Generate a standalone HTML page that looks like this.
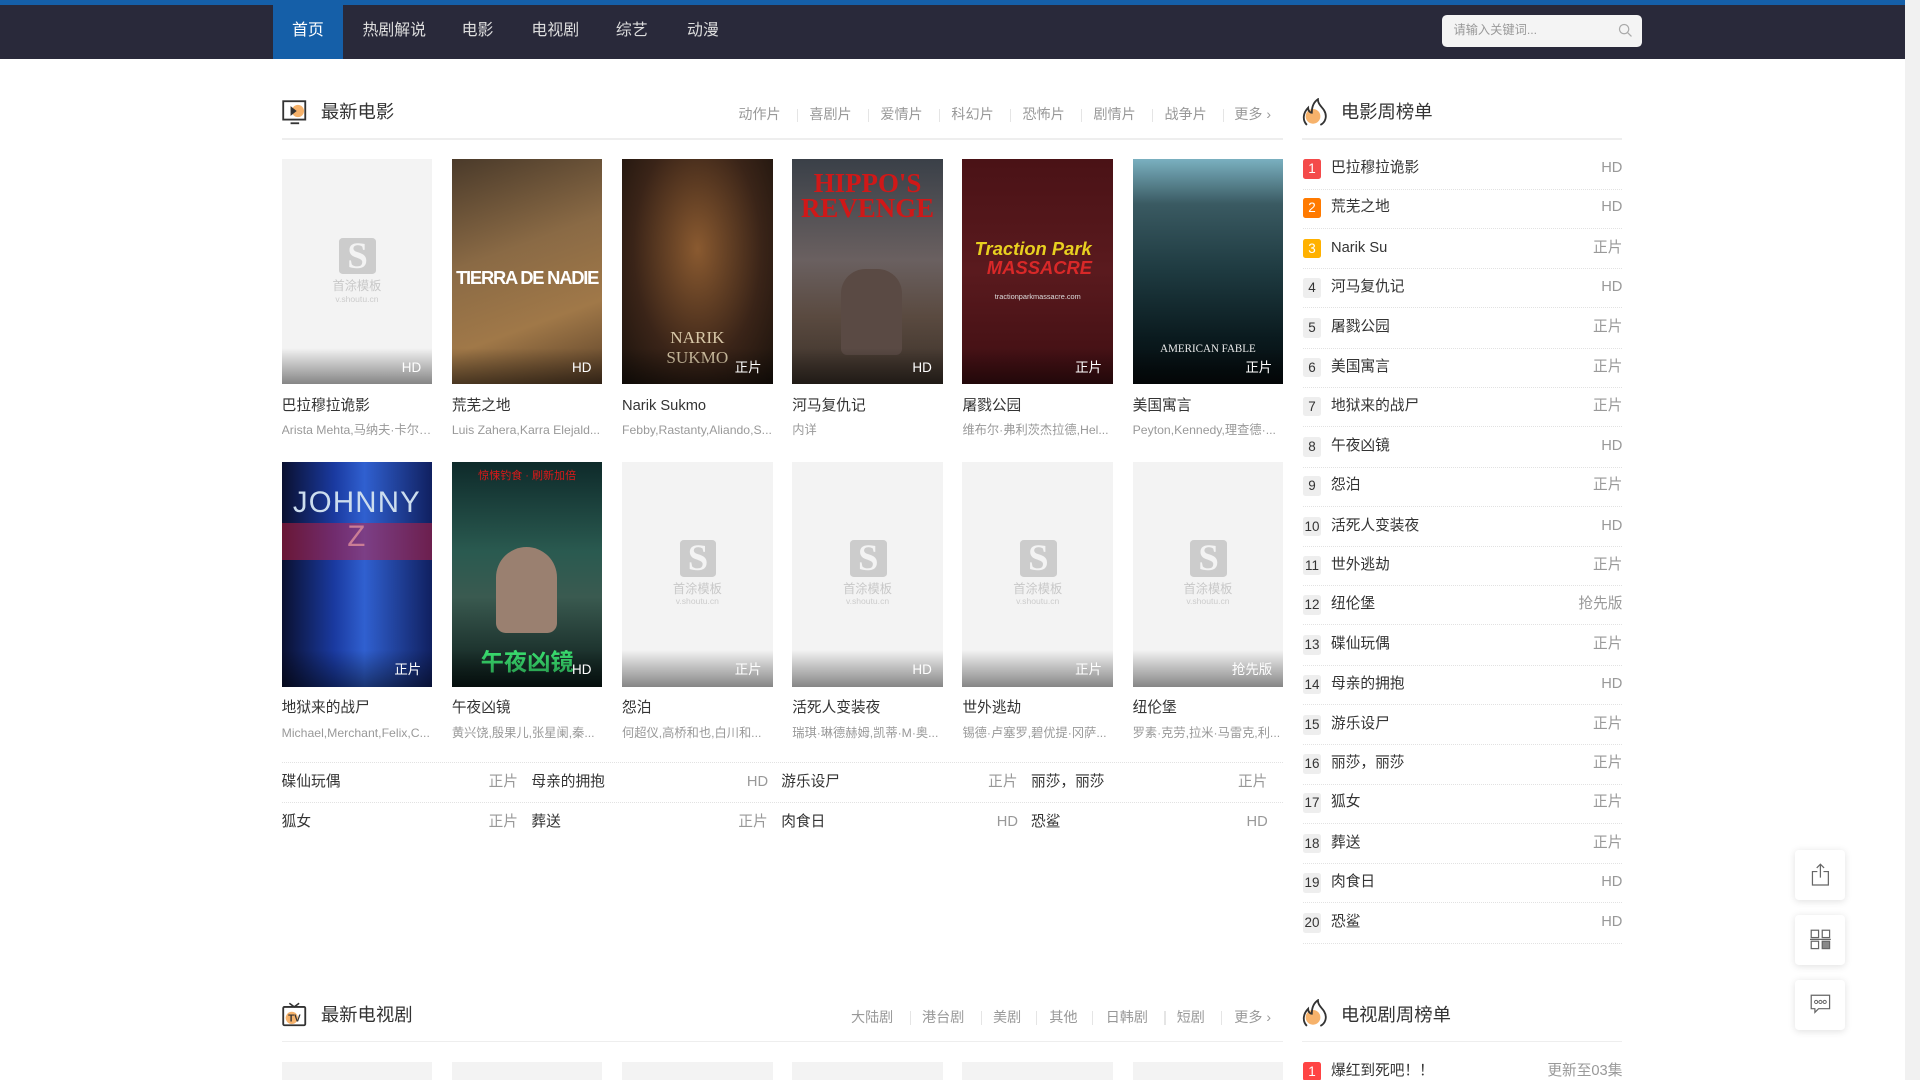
<!DOCTYPE html>
<html><head><meta charset="utf-8">
<style>
*{margin:0;padding:0;box-sizing:border-box}
html,body{width:1920px;height:1080px;overflow:hidden;background:#fff}
#w{zoom:1.22449;width:1568px;height:882px;position:relative;overflow:hidden;font-family:"Liberation Sans","Noto Sans CJK SC",sans-serif;color:#333;line-height:16px}
.a{position:absolute}
.top{left:0;top:0;width:1556px;height:4px;background:#155fa8}
.nav{left:0;top:4px;width:1556px;height:44px;background:#29293a}
.nav span{position:absolute;top:0;height:44px;line-height:42px;color:#ddd;font-size:13px}
.sb{left:1556px;top:0;width:12px;height:882px;background:#f1f1f1}
.search{left:1178px;top:12px;width:163px;height:26px;background:#f4f4f4;border-radius:4px;font-size:10px;color:#999;line-height:26px;padding-left:9px}
.hd{font-size:15px;color:#333;line-height:20px}
.tabs{font-size:11.5px;color:#999}
.tabs span{position:absolute;top:0;white-space:nowrap;line-height:16px}
.tabs i{position:absolute;top:3px;width:1px;height:11px;background:#e5e5e5}
.line{height:1px;background:#eee}
.p{width:123px;height:184px;overflow:hidden}
.p .g{position:absolute;left:0;bottom:0;width:100%;height:30px;background:linear-gradient(rgba(0,0,0,0),rgba(0,0,0,.45))}
.p .l{position:absolute;right:9px;bottom:6px;color:#fff;font-size:11px}
.ph{background:#f3f3f3}
.ph .s{position:absolute;left:47px;top:64px;width:30px;height:30px;background:#ccc;border-radius:3px}
.ph .s:after{content:"S";position:absolute;left:0;top:-3px;width:30px;text-align:center;color:#f3f3f3;font:bold 30px/36px "Liberation Serif",serif}
.ph .t{position:absolute;left:0;top:98px;width:123px;text-align:center;color:#c8c8c8;font-size:10px;line-height:12px}
.ph .u{position:absolute;left:0;top:110px;width:123px;text-align:center;color:#ccc;font-size:7px;line-height:9px}
.tt{font-size:12px;color:#333;white-space:nowrap;line-height:16px}
.ac{font-size:10px;color:#999;white-space:nowrap;width:123px;overflow:hidden;text-overflow:ellipsis;line-height:14px}
.row{font-size:12px;color:#333}
.row span,.row b{line-height:16px;height:16px}
.row b{font-weight:normal;position:absolute;color:#999}
.dot{height:0;border-top:1px dotted #e2e2e2}
.rk .n{position:absolute;left:0;width:15px;height:16px;line-height:16px;text-align:center;font-size:11px;color:#333;background:#eee;border-radius:2px}
.rk .nm{position:absolute;left:23px;font-size:12px;color:#333;line-height:16px;height:16px}
.rk .r{position:absolute;right:0;font-size:12px;color:#999;line-height:16px;height:16px}
.fb{width:41px;height:41px;background:#fff;border-radius:3px;box-shadow:0 1px 6px rgba(0,0,0,.12)}
</style></head><body><div id="w">
<div class="a top"></div>
<div class="a nav">
<span style="left:223px;width:57px;background:#155fa8;text-align:center;color:#fff">首页</span>
<span style="left:296px">热剧解说</span><span style="left:377px">电影</span><span style="left:434px">电视剧</span><span style="left:503px">综艺</span><span style="left:561px">动漫</span>
</div>
<div class="a search">请输入关键词...<svg style="position:absolute;right:8px;top:7px" width="12" height="12" viewBox="0 0 12 12"><circle cx="5" cy="5" r="3.8" fill="none" stroke="#aaa" stroke-width="1"/><path d="M8 8l3 3" stroke="#aaa"/></svg></div>
<div class="a sb"></div>

<svg class="a" style="left:230px;top:82px" width="21" height="21" viewBox="0 0 21 21"><rect x="1" y="1" width="18" height="15" fill="none" stroke="#333" stroke-width="1.5"/><circle cx="13" cy="9" r="5" fill="#f6b26b"/><path d="M7 5v8l5-4z" fill="#333"/><path d="M7 19h7" stroke="#333" stroke-width="1.5"/></svg>
<div class="a hd" style="left:262px;top:82px">最新电影</div>
<div class="a tabs" style="left:603px;top:86px;width:445px;height:16px">
<span style="left:0">动作片</span><i style="left:48px"></i><span style="left:58px">喜剧片</span><i style="left:106px"></i><span style="left:116px">爱情片</span><i style="left:164px"></i><span style="left:174px">科幻片</span><i style="left:222px"></i><span style="left:232px">恐怖片</span><i style="left:280px"></i><span style="left:290px">剧情片</span><i style="left:338px"></i><span style="left:348px">战争片</span><i style="left:396px"></i><span style="left:405px">更多 ›</span>
</div>
<div class="a line" style="left:230px;top:113px;width:818px"></div>

<div class="a p ph" style="left:230px;top:130px"><div class="s"></div><div class="t">首涂模板</div><div class="u">v.shoutu.cn</div><div class="g"></div><span class="l">HD</span></div>
<div class="a p" style="left:369px;top:130px;background:linear-gradient(160deg,#4a3a2a,#8a6a45 40%,#a07848 70%,#5a4028)"><div style="position:absolute;top:88px;width:100%;text-align:center;color:#fff;font:bold 15px 'Liberation Sans';letter-spacing:-1px">TIERRA DE NADIE</div><div class="g"></div><span class="l">HD</span></div>
<div class="a p" style="left:508px;top:130px;background:radial-gradient(ellipse at 50% 40%,#8a5a30,#3a2418 60%,#1a120c)"><div style="position:absolute;top:138px;width:100%;text-align:center;color:#d8c8a8;font:14px 'Liberation Serif'">NARIK<br>SUKMO</div><div class="g"></div><span class="l">正片</span></div>
<div class="a p" style="left:647px;top:130px;background:linear-gradient(#3a4048,#6a6060 45%,#5a4a40 70%,#3a3028)"><div style="position:absolute;top:10px;width:100%;text-align:center;color:#d01818;font:bold 22px/20px 'Liberation Serif'">HIPPO'S<br>REVENGE</div><div style="position:absolute;top:90px;left:40px;width:50px;height:70px;background:#5a4a44;border-radius:20px 20px 5px 5px"></div><div class="g"></div><span class="l">HD</span></div>
<div class="a p" style="left:786px;top:130px;background:linear-gradient(#4a1216,#5a1a1e 50%,#3e0e12)"><div style="position:absolute;top:64px;left:10px;color:#e8d020;font:italic bold 15px 'Liberation Sans'">Traction Park</div><div style="position:absolute;top:80px;left:20px;color:#d82828;font:italic bold 15px 'Liberation Sans'">MASSACRE</div><div style="position:absolute;top:104px;width:100%;text-align:center;color:#ddd;font-size:6px">tractionparkmassacre.com</div><div class="g"></div><span class="l">正片</span></div>
<div class="a p" style="left:925px;top:130px;background:linear-gradient(#7ab0c0,#3a5a62 20%,#1e3a40 50%,#0a1a1e 80%,#050a0c)"><div style="position:absolute;top:150px;width:100%;text-align:center;color:#eee;font:9px 'Liberation Serif'">AMERICAN FABLE</div><div class="g"></div><span class="l">正片</span></div>

<div class="a tt" style="left:230px;top:324px">巴拉穆拉诡影</div><div class="a ac" style="left:230px;top:345px">Arista Mehta,马纳夫·卡尔,...</div>
<div class="a tt" style="left:369px;top:324px">荒芜之地</div><div class="a ac" style="left:369px;top:345px">Luis Zahera,Karra Elejald...</div>
<div class="a tt" style="left:508px;top:324px">Narik Sukmo</div><div class="a ac" style="left:508px;top:345px">Febby,Rastanty,Aliando,S...</div>
<div class="a tt" style="left:647px;top:324px">河马复仇记</div><div class="a ac" style="left:647px;top:345px">内详</div>
<div class="a tt" style="left:786px;top:324px">屠戮公园</div><div class="a ac" style="left:786px;top:345px">维布尔·弗利茨杰拉德,Hel...</div>
<div class="a tt" style="left:925px;top:324px">美国寓言</div><div class="a ac" style="left:925px;top:345px">Peyton,Kennedy,理查德·...</div>

<div class="a p" style="left:230px;top:377px;background:linear-gradient(90deg,#0a1030,#1a3aa0 35%,#3060d0 55%,#102060)"><div style="position:absolute;top:20px;width:100%;text-align:center;color:#cde;font:24px 'Liberation Sans';letter-spacing:1px">JOHNNY Z</div><div style="position:absolute;top:50px;left:0;width:100%;height:30px;background:rgba(200,30,60,.5)"></div><div class="g"></div><span class="l">正片</span></div>
<div class="a p" style="left:369px;top:377px;background:linear-gradient(#0e2a2a,#2a5a50 40%,#3a5a50 60%,#0a1a18)"><div style="position:absolute;top:4px;width:100%;text-align:center;color:#e01818;font-size:9px">惊悚钓食 · 刷新加倍</div><div style="position:absolute;top:70px;left:36px;width:50px;height:70px;background:#9a8070;border-radius:25px 25px 8px 8px"></div><div style="position:absolute;top:148px;width:100%;text-align:center;color:#3ae070;font:bold 19px 'Noto Sans CJK SC'">午夜凶镜</div><div class="g"></div><span class="l">HD</span></div>
<div class="a p ph" style="left:508px;top:377px"><div class="s"></div><div class="t">首涂模板</div><div class="u">v.shoutu.cn</div><div class="g"></div><span class="l">正片</span></div>
<div class="a p ph" style="left:647px;top:377px"><div class="s"></div><div class="t">首涂模板</div><div class="u">v.shoutu.cn</div><div class="g"></div><span class="l">HD</span></div>
<div class="a p ph" style="left:786px;top:377px"><div class="s"></div><div class="t">首涂模板</div><div class="u">v.shoutu.cn</div><div class="g"></div><span class="l">正片</span></div>
<div class="a p ph" style="left:925px;top:377px"><div class="s"></div><div class="t">首涂模板</div><div class="u">v.shoutu.cn</div><div class="g"></div><span class="l">抢先版</span></div>

<div class="a tt" style="left:230px;top:571px">地狱来的战尸</div><div class="a ac" style="left:230px;top:592px">Michael,Merchant,Felix,C...</div>
<div class="a tt" style="left:369px;top:571px">午夜凶镜</div><div class="a ac" style="left:369px;top:592px">黄兴饶,殷果儿,张星阑,秦...</div>
<div class="a tt" style="left:508px;top:571px">怨泊</div><div class="a ac" style="left:508px;top:592px">何超仪,高桥和也,白川和...</div>
<div class="a tt" style="left:647px;top:571px">活死人变装夜</div><div class="a ac" style="left:647px;top:592px">瑞琪·琳德赫姆,凯蒂·M·奥...</div>
<div class="a tt" style="left:786px;top:571px">世外逃劫</div><div class="a ac" style="left:786px;top:592px">锡德·卢塞罗,碧优提·冈萨...</div>
<div class="a tt" style="left:925px;top:571px">纽伦堡</div><div class="a ac" style="left:925px;top:592px">罗素·克劳,拉米·马雷克,利...</div>

<div class="a dot" style="left:230px;top:622px;width:818px"></div>
<div class="a dot" style="left:230px;top:655px;width:818px"></div>
<div class="a row" style="left:230px;top:631px;width:818px;height:50px">
<span class="a" style="left:0;top:0">碟仙玩偶</span><b style="left:169px;top:0">正片</b>
<span class="a" style="left:204px;top:0">母亲的拥抱</span><b style="left:380px;top:0">HD</b>
<span class="a" style="left:408px;top:0">游乐设尸</span><b style="left:577px;top:0">正片</b>
<span class="a" style="left:612px;top:0">丽莎，丽莎</span><b style="left:781px;top:0">正片</b>
<span class="a" style="left:0;top:33px">狐女</span><b style="left:169px;top:33px">正片</b>
<span class="a" style="left:204px;top:33px">葬送</span><b style="left:373px;top:33px">正片</b>
<span class="a" style="left:408px;top:33px">肉食日</span><b style="left:584px;top:33px">HD</b>
<span class="a" style="left:612px;top:33px">恐鲨</span><b style="left:788px;top:33px">HD</b>
</div>

<svg class="a" style="left:1063px;top:80px" width="22" height="24" viewBox="0 0 22 24"><circle cx="9" cy="15" r="6" fill="#f6b26b"/><path d="M4 22C0 18 1 12 5 8c0 3 2 4 3 4C8 7 10 3 13 1c0 4 3 6 5 9 3 5 1 10-3 12" fill="none" stroke="#333" stroke-width="1.5"/></svg>
<div class="a hd" style="left:1095px;top:82px">电影周榜单</div>
<div class="a line" style="left:1063px;top:113px;width:262px"></div>
<div class="a rk" id="rk" style="left:1064px;top:130px;width:261px;height:650px"></div>

<svg class="a" style="left:230px;top:818px" width="21" height="21" viewBox="0 0 21 21"><rect x="1" y="4" width="18" height="15" rx="1" fill="none" stroke="#333" stroke-width="1.5"/><circle cx="8" cy="13" r="5" fill="#f6b26b"/><path d="M6 1l4 3 4-3" fill="none" stroke="#333" stroke-width="1.3"/><text x="5" y="16" font-size="8" font-family="Liberation Sans" font-weight="bold" fill="#333">TV</text></svg>
<div class="a hd" style="left:262px;top:819px">最新电视剧</div>
<div class="a tabs" style="left:695px;top:823px;width:353px;height:16px">
<span style="left:0">大陆剧</span><i style="left:48px"></i><span style="left:58px">港台剧</span><i style="left:106px"></i><span style="left:116px">美剧</span><i style="left:151px"></i><span style="left:162px">其他</span><i style="left:197px"></i><span style="left:208px">日韩剧</span><i style="left:256px"></i><span style="left:266px">短剧</span><i style="left:302px"></i><span style="left:313px">更多 ›</span>
</div>
<div class="a line" style="left:230px;top:850px;width:818px"></div>
<div class="a" style="left:230px;top:867px;width:123px;height:20px;background:#f3f3f3"></div>
<div class="a" style="left:369px;top:867px;width:123px;height:20px;background:#f3f3f3"></div>
<div class="a" style="left:508px;top:867px;width:123px;height:20px;background:#f3f3f3"></div>
<div class="a" style="left:647px;top:867px;width:123px;height:20px;background:#f3f3f3"></div>
<div class="a" style="left:786px;top:867px;width:123px;height:20px;background:#f3f3f3"></div>
<div class="a" style="left:925px;top:867px;width:123px;height:20px;background:#f3f3f3"></div>
<svg class="a" style="left:1063px;top:816px" width="22" height="24" viewBox="0 0 22 24"><circle cx="9" cy="15" r="6" fill="#f6b26b"/><path d="M4 22C0 18 1 12 5 8c0 3 2 4 3 4C8 7 10 3 13 1c0 4 3 6 5 9 3 5 1 10-3 12" fill="none" stroke="#333" stroke-width="1.5"/></svg>
<div class="a hd" style="left:1095px;top:819px">电视剧周榜单</div>
<div class="a line" style="left:1063px;top:850px;width:262px"></div>
<div class="a rk" style="left:1064px;top:867px;width:261px;height:20px"><span class="n" style="top:0;background:#f44;color:#fff">1</span><span class="nm" style="top:0">爆红到死吧！！</span><span class="r" style="top:0">更新至03集</span></div>

<div class="a fb" style="left:1466px;top:694px"><svg style="position:absolute;left:12px;top:11px" width="17" height="19" viewBox="0 0 17 19"><path d="M6 7H2v11h13V7h-4M8.5 1v11M5.5 4l3-3 3 3" fill="none" stroke="#666" stroke-width="1"/></svg></div>
<div class="a fb" style="left:1466px;top:747px"><svg style="position:absolute;left:12px;top:12px" width="17" height="17" viewBox="0 0 17 17"><rect x="1" y="1" width="6" height="6" fill="none" stroke="#666"/><rect x="10" y="1" width="6" height="6" fill="none" stroke="#666"/><rect x="1" y="10" width="6" height="6" fill="none" stroke="#666"/><rect x="10" y="10" width="6" height="6" fill="#888" stroke="#666"/><path d="M0 8.5h17" stroke="#666"/></svg></div>
<div class="a fb" style="left:1466px;top:800px"><svg style="position:absolute;left:12px;top:12px" width="17" height="17" viewBox="0 0 17 17"><path d="M1 1h15v11H7l-3 3v-3H1z" fill="none" stroke="#666"/><circle cx="5" cy="6.5" r="1.3" fill="none" stroke="#666" stroke-width=".8"/><circle cx="8.5" cy="6.5" r="1.3" fill="none" stroke="#666" stroke-width=".8"/><circle cx="12" cy="6.5" r="1.3" fill="none" stroke="#666" stroke-width=".8"/></svg></div>
</div>
<script>
var d=[["巴拉穆拉诡影","HD"],["荒芜之地","HD"],["Narik Su","正片"],["河马复仇记","HD"],["屠戮公园","正片"],["美国寓言","正片"],["地狱来的战尸","正片"],["午夜凶镜","HD"],["怨泊","正片"],["活死人变装夜","HD"],["世外逃劫","正片"],["纽伦堡","抢先版"],["碟仙玩偶","正片"],["母亲的拥抱","HD"],["游乐设尸","正片"],["丽莎，丽莎","正片"],["狐女","正片"],["葬送","正片"],["肉食日","HD"],["恐鲨","HD"]];
var c=["#f44a4a","#ff7a00","#ffb100"],h="";
for(var i=0;i<20;i++){var y=Math.round(i*32.4);var s=i<3?"background:"+c[i]+";color:#fff;":"";
h+='<span class="n" style="top:'+y+'px;'+s+'">'+(i+1)+'</span><span class="nm" style="top:'+y+'px">'+d[i][0]+'</span><span class="r" style="top:'+y+'px">'+d[i][1]+'</span><div class="dot" style="position:absolute;left:0;width:261px;top:'+(y+24)+'px"></div>';}
document.getElementById("rk").innerHTML=h;
</script>
</body></html>
